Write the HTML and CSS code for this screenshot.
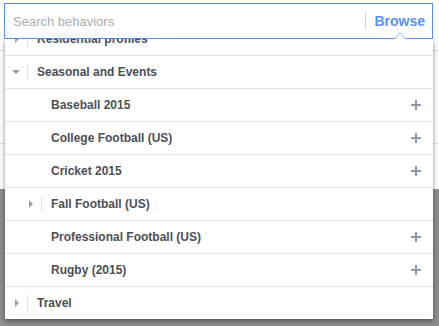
FILE: index.html
```html
<!DOCTYPE html>
<html lang="en">
<head>
<meta charset="UTF-8">
<title>Browse behaviors</title>
<link rel="stylesheet" href="styles.css">
</head>
<body>

<div class="picker">

<div class="search">
<input type="text" placeholder="Search behaviors">
<span class="search-sep"></span>
<span class="browse">Browse</span>
</div>

<div class="menu">
<span class="notch"></span>
<ul class="list">
<li class="row"><span class="arrow right"></span><span class="sep"></span><span class="label">Residential profiles</span></li>
<li class="row"><span class="arrow down"></span><span class="sep"></span><span class="label">Seasonal and Events</span></li>
<li class="row sub leaf"><span class="label">Baseball 2015</span><span class="plus"></span></li>
<li class="row sub leaf"><span class="label">College Football (US)</span><span class="plus"></span></li>
<li class="row sub leaf"><span class="label">Cricket 2015</span><span class="plus"></span></li>
<li class="row sub"><span class="arrow right"></span><span class="sep"></span><span class="label">Fall Football (US)</span></li>
<li class="row sub leaf"><span class="label">Professional Football (US)</span><span class="plus"></span></li>
<li class="row sub leaf"><span class="label">Rugby (2015)</span><span class="plus"></span></li>
<li class="row"><span class="arrow right"></span><span class="sep"></span><span class="label">Travel</span></li>
</ul>
</div>

</div>

</body>
</html>
```

FILE: styles.css
```css
/* ---------- GLOBAL ---------- */
*{margin:0;padding:0;box-sizing:border-box;}
body{
font-family:'Liberation Sans',Arial,sans-serif;
height:326px;
overflow:hidden;
background:
linear-gradient(#e3e3e3,#e3e3e3) 0 50px/100% 1px no-repeat,
linear-gradient(#e3e3e3,#e3e3e3) 0 143px/100% 1px no-repeat,
linear-gradient(to bottom,#fff 189px,#8e8e8e 189px);
}

.picker{padding:3px 6px 0 4px;width:439px;}

/* ---------- SEARCH ---------- */
.search{
position:relative;
z-index:2;
display:flex;
align-items:center;
height:36px;
width:429px;
background:#fff;
border:1px solid #5b8def;
padding:0 7px 0 8px;
}
.search input{
flex:1;
border:none;
outline:none;
background:transparent;
font-family:'Liberation Sans',Arial,sans-serif;
font-size:13px;
color:#4b4f56;
}
.search input::placeholder{color:#acacac;}
.search-sep{width:1px;height:16px;background:#d3d6db;margin-right:8px;}
.browse{font-size:14px;font-weight:700;color:#5890ff;}

/* ---------- MENU ---------- */
.menu{
position:relative;
margin-left:1px;
width:428px;
height:280px;
background:#fff;
box-shadow:0 2px 5px rgba(0,0,0,0.45);
}
.notch{
position:absolute;
z-index:3;
left:391px;
top:-5px;
width:8px;
height:8px;
background:#fff;
border-top:1px solid #a9c2f2;
border-left:1px solid #a9c2f2;
transform:rotate(45deg);
}
.list{list-style:none;height:280px;overflow:hidden;}
.list .row:first-child{margin-top:-16px;}

.row{
display:flex;
align-items:center;
height:33px;
border-bottom:1px solid #e5e5e5;
font-size:12px;
font-weight:700;
color:#4b4f56;
}
.row.sub{padding-left:14px;}
.row.leaf{padding-left:46px;padding-right:12px;}

.arrow{width:22px;display:flex;justify-content:center;align-items:center;}
.arrow::before{content:"";display:block;}
.arrow.down::before{
border-left:4px solid transparent;
border-right:4px solid transparent;
border-top:4px solid #9a9a9a;
}
.arrow.right::before{
margin-left:2px;
border-top:4px solid transparent;
border-bottom:4px solid transparent;
border-left:4px solid #a0a0a0;
}
.sep{width:1px;height:16px;background:#e0e0e0;margin-right:9px;}
.label{flex:1;}

.plus{position:relative;width:10px;height:10px;}
.plus::before,.plus::after{content:"";position:absolute;background:#9197a3;}
.plus::before{left:0;top:4px;width:10px;height:2px;}
.plus::after{left:4px;top:0;width:2px;height:10px;}
```
